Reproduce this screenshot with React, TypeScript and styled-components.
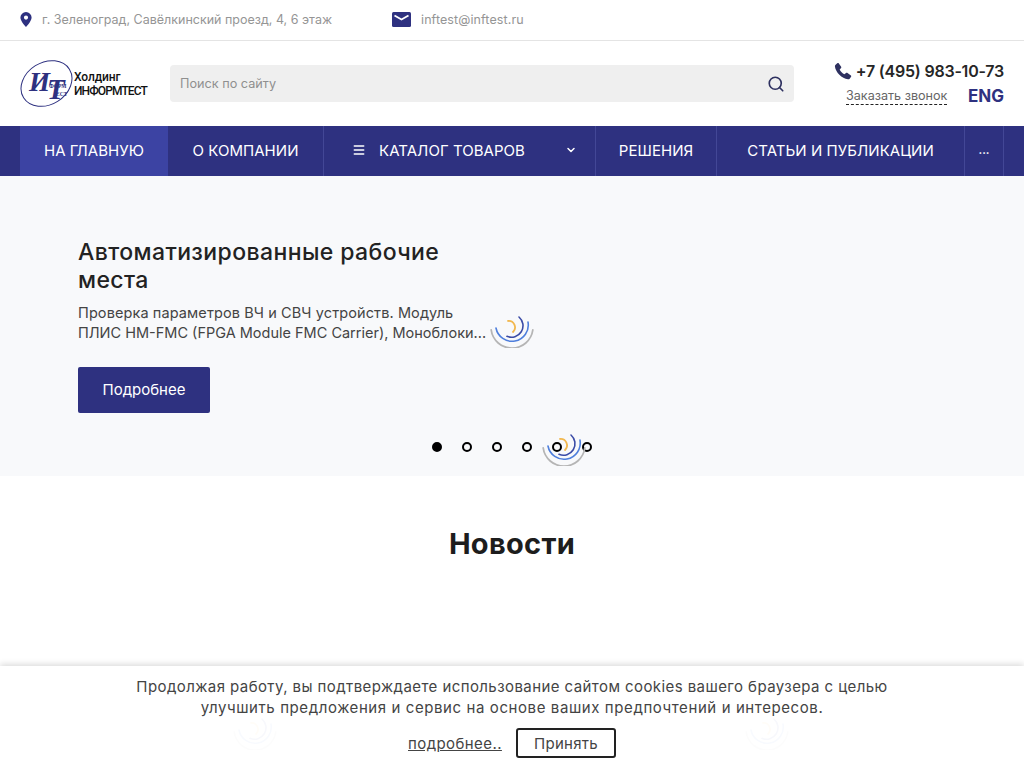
import React from "react";
import styled, { createGlobalStyle } from "styled-components";
import { Search, ChevronDown, Menu } from "lucide-react";

const Global = createGlobalStyle`
  html, body { margin: 0; padding: 0; background: #fff; }
  body { font-family: Inter, "Open Sans", sans-serif; color: #1f1f1f; overflow: hidden; }
  * { box-sizing: border-box; }
`;

const Page = styled.div`
  width: 1024px;
  height: 768px;
  overflow: hidden;
  position: relative;
`;

const TopBar = styled.div`
  height: 41px;
  border-bottom: 1px solid #e4e4e4;
  display: flex;
  align-items: center;
  padding: 0 0 2px 20px;
`;

const TopItem = styled.div<{ $w: number; $ls: number }>`
  width: ${(p) => p.$w}px;
  display: flex;
  align-items: center;
  color: #959595;
  font-size: 12.5px;
  letter-spacing: ${(p) => p.$ls}px;
`;

const TopIcon = styled.span<{ $w: number }>`
  width: ${(p) => p.$w}px;
  display: flex;
  align-items: center;
`;

const Header = styled.div`
  height: 85px;
  display: flex;
  align-items: center;
  padding: 0 20px;
`;

const LogoBox = styled.div`
  width: 150px;
  display: flex;
  align-items: center;
  flex: none;
`;

const LogoWords = styled.div`
  font-family: Roboto, "Liberation Sans", sans-serif;
  color: #111;
  font-size: 12px;
  line-height: 14px;
  font-weight: 500;
`;

const LogoLine = styled.div<{ $tight?: boolean }>`
  letter-spacing: ${(p) => (p.$tight ? "-0.9px" : "-0.1px")};
  white-space: nowrap;
`;

const SearchBox = styled.div`
  width: 624px;
  height: 37px;
  background: #efefef;
  border-radius: 4px;
  display: flex;
  align-items: center;
  justify-content: space-between;
  padding: 0 9px 0 10px;
  color: #8f8f8f;
  font-size: 12.7px;
`;

const Contacts = styled.div`
  margin-left: auto;
  width: 172px;
  display: flex;
  flex-direction: column;
  align-items: flex-end;
`;

const PhoneRow = styled.div`
  display: flex;
  align-items: center;
  gap: 3px;
  font-size: 16px;
  font-weight: 600;
  letter-spacing: -0.22px;
  color: #262626;
  white-space: nowrap;
  height: 20px;
`;

const LowerRow = styled.div`
  display: flex;
  align-items: center;
  justify-content: space-between;
  width: 158px;
  margin-top: 5px;
`;

const CallLink = styled.span`
  color: #666;
  font-size: 12.6px;
  border-bottom: 1px dashed #222;
  line-height: 17px;
  white-space: nowrap;
`;

const Lang = styled.span`
  color: #2e3180;
  font-size: 17px;
  font-weight: 700;
`;

const Nav = styled.nav`
  height: 50px;
  background: #2e3180;
  padding: 0 20px;
  display: flex;
`;

const NavItem = styled.div<{ $w: number; $active?: boolean; $line?: boolean }>`
  width: ${(p) => p.$w}px;
  flex: none;
  display: flex;
  align-items: center;
  justify-content: center;
  padding-bottom: 2px;
  color: #fff;
  font-size: 15px;
  letter-spacing: 0.05px;
  white-space: nowrap;
  background: ${(p) => (p.$active ? "#3c43a3" : "transparent")};
  border-right: ${(p) => (p.$line ? "1px solid #434796" : "none")};
`;

const CatalogItem = styled(NavItem)`
  justify-content: flex-start;
  padding-left: 28px;
`;

const CatalogLabel = styled.span`
  margin-left: 13px;
  width: 186px;
`;

const MoreDots = styled.span`
  font-size: 11px;
  font-weight: 700;
`;

const Hero = styled.section`
  height: 300px;
  background: #f8f9fb;
  position: relative;
  padding: 62px 0 0 78px;
`;

const HeroTitle = styled.h2`
  margin: 0;
  width: 400px;
  font-size: 23px;
  line-height: 28px;
  font-weight: 500;
  letter-spacing: 0.4px;
  color: #222;
`;

const HeroText = styled.div`
  margin: 9px 0 0;
  width: 420px;
  font-size: 14.5px;
  line-height: 20px;
  color: #444;
  white-space: nowrap;
`;

const TextLine = styled.div<{ $ls: number }>`
  letter-spacing: ${(p) => p.$ls}px;
`;

const MoreButton = styled.div`
  margin-top: 24px;
  width: 132px;
  height: 46px;
  background: #2e3180;
  color: #fff;
  border-radius: 2px;
  font-size: 15px;
  padding-bottom: 2px;
  display: flex;
  align-items: center;
  justify-content: center;
`;

const Dots = styled.div`
  position: absolute;
  left: 432px;
  top: 266px;
  display: flex;
  gap: 20px;
`;

const Dot = styled.span<{ $on?: boolean }>`
  width: 10px;
  height: 10px;
  border-radius: 50%;
  border: 2px solid #000;
  background: ${(p) => (p.$on ? "#000" : "transparent")};
`;

const SpinnerSlot = styled.div<{ $x: number; $y: number }>`
  position: absolute;
  left: ${(p) => p.$x}px;
  top: ${(p) => p.$y}px;
  width: 44px;
  height: 44px;
`;

const News = styled.section`
  position: relative;
  padding-top: 50px;
  height: 292px;
`;

const NewsTitle = styled.h2`
  margin: 0;
  text-align: center;
  font-size: 29px;
  line-height: 36px;
  font-weight: 700;
  letter-spacing: 0.3px;
  color: #1d1d1d;
`;

const Cookie = styled.div`
  position: absolute;
  left: 0;
  right: 0;
  bottom: 0;
  height: 102px;
  background: rgba(255, 255, 255, 0.96);
  box-shadow: 0 -2px 6px rgba(0, 0, 0, 0.14);
  display: flex;
  flex-direction: column;
  align-items: center;
  padding-top: 10px;
  color: #444;
`;

const CookieText = styled.div`
  font-size: 15px;
  line-height: 21px;
  text-align: center;
  white-space: nowrap;
`;

const CookieActions = styled.div`
  display: flex;
  align-items: center;
  gap: 13px;
  margin-top: 10px;
`;

const MoreLink = styled.span`
  width: 95px;
  font-size: 15px;
  letter-spacing: 0.42px;
  text-decoration: underline;
  white-space: nowrap;
  color: #444;
`;

const AcceptButton = styled.div`
  width: 100px;
  height: 30px;
  border: 2px solid #222;
  border-radius: 3px;
  display: flex;
  align-items: center;
  justify-content: center;
  font-size: 15px;
  letter-spacing: 0.3px;
  color: #444;
  background: #fff;
`;

const Spinner = () => (
  <svg width="44" height="44" viewBox="0 0 44 44" fill="none" strokeLinecap="round">
    <path d="M1.2 26A21 21 0 0 0 42.8 26" stroke="#b5b5b5" strokeWidth="1.8" />
    <path d="M6 24A16 16 0 0 0 38 18" stroke="#4f7fdc" strokeWidth="1.6" />
    <path d="M17 32.3A11.5 11.5 0 0 0 29 13" stroke="#3a4ba6" strokeWidth="1.6" />
    <path d="M18 17A6.4 6.4 0 0 1 23 28" stroke="#f2b84f" strokeWidth="1.8" />
  </svg>
);

const Logo = () => (
  <svg width="54" height="52" viewBox="0 0 54 52">
    <ellipse cx="26.5" cy="25.5" rx="27" ry="21" transform="rotate(-32 26.5 25.5)" fill="none" stroke="#2e3180" strokeWidth="1" />
    <text fontFamily="Liberation Serif, serif" fontWeight="700" fill="#2e3180">
      <tspan x="9" y="33" fontStyle="italic" fontSize="27">И</tspan>
      <tspan x="27" y="41" fontStyle="italic" fontSize="29">Т</tspan>
      <tspan x="29" y="30" fontSize="5.5">ФОРМ</tspan>
      <tspan x="36" y="38" fontSize="5.5">ЕСТ</tspan>
    </text>
  </svg>
);

export default function App() {
  return (
    <Page>
      <Global />
      <TopBar>
        <TopItem $w={372} $ls={0}>
          <TopIcon $w={22}>
            <svg width="12" height="15" viewBox="0 0 12 15">
              <path fillRule="evenodd" d="M6 0a5.6 5.6 0 0 1 5.6 5.6C11.6 9.4 6 15 6 15S.4 9.4.4 5.6A5.6 5.6 0 0 1 6 0Zm0 3.5a2.1 2.1 0 1 0 0 4.2 2.1 2.1 0 0 0 0-4.2Z" fill="#2e3180" />
            </svg>
          </TopIcon>
          г. Зеленоград, Савёлкинский проезд, 4, 6 этаж
        </TopItem>
        <TopItem $w={200} $ls={0.1}>
          <TopIcon $w={29}>
            <svg width="19" height="15" viewBox="0 0 19 15">
              <rect width="19" height="15" rx="1.5" fill="#2e3180" />
              <path d="M2.5 3.5 9.5 7.5 16.5 3.5" fill="none" stroke="#fff" strokeWidth="1.8" />
            </svg>
          </TopIcon>
          inftest@inftest.ru
        </TopItem>
      </TopBar>
      <Header>
        <LogoBox>
          <Logo />
          <LogoWords>
            <LogoLine>Холдинг</LogoLine>
            <LogoLine $tight>ИНФОРМТЕСТ</LogoLine>
          </LogoWords>
        </LogoBox>
        <SearchBox>
          Поиск по сайту
          <Search size={18} color="#2e3160" strokeWidth={2.2} />
        </SearchBox>
        <Contacts>
          <PhoneRow>
            <svg width="20" height="20" viewBox="0 0 24 24">
              <path d="M6.6 2.5 9.8 7c.3.5.3 1-.1 1.4L8 10.3c1 2.3 3.4 4.7 5.7 5.7l1.9-1.7c.4-.4.9-.4 1.4-.1l4.5 3.2c.5.4.6 1 .2 1.5l-1.7 2.3c-.5.6-1.2.9-2 .8C10.5 20.8 3.2 13.5 2.3 6.5c-.1-.8.2-1.500.8-2l2-1.800c.5-.4 1.100-.6 1.500-.2Z" fill="#2e3160" />
            </svg>
            +7 (495) 983-10-73
          </PhoneRow>
          <LowerRow>
            <CallLink>Заказать звонок</CallLink>
            <Lang>ENG</Lang>
          </LowerRow>
        </Contacts>
      </Header>
      <Nav>
        <NavItem $w={148} $active>НА ГЛАВНУЮ</NavItem>
        <NavItem $w={156} $line>О КОМПАНИИ</NavItem>
        <CatalogItem $w={272} $line>
          <Menu size={14} strokeWidth={2.6} />
          <CatalogLabel>КАТАЛОГ ТОВАРОВ</CatalogLabel>
          <ChevronDown size={12} strokeWidth={3} />
        </CatalogItem>
        <NavItem $w={121} $line>РЕШЕНИЯ</NavItem>
        <NavItem $w={248} $line>СТАТЬИ И ПУБЛИКАЦИИ</NavItem>
        <NavItem $w={39} $line><MoreDots>...</MoreDots></NavItem>
      </Nav>
      <Hero>
        <HeroTitle>Автоматизированные рабочие места</HeroTitle>
        <HeroText>
          <TextLine $ls={0.1}>Проверка параметров ВЧ и СВЧ устройств. Модуль</TextLine>
          <TextLine $ls={0}>ПЛИС HM-FMC (FPGA Module FMC Carrier), Моноблоки...</TextLine>
        </HeroText>
        <MoreButton>Подробнее</MoreButton>
        <SpinnerSlot $x={490} $y={128}><Spinner /></SpinnerSlot>
        <Dots>
          <Dot $on /><Dot /><Dot /><Dot /><Dot /><Dot />
        </Dots>
        <SpinnerSlot $x={542} $y={246}><Spinner /></SpinnerSlot>
      </Hero>
      <News>
        <NewsTitle>Новости</NewsTitle>
        <SpinnerSlot $x={233} $y={230}><Spinner /></SpinnerSlot>
        <SpinnerSlot $x={745} $y={230}><Spinner /></SpinnerSlot>
      </News>
      <Cookie>
        <CookieText>
          <TextLine $ls={0.42}>Продолжая работу, вы подтверждаете использование сайтом cookies вашего браузера с целью</TextLine>
          <TextLine $ls={0.59}>улучшить предложения и сервис на основе ваших предпочтений и интересов.</TextLine>
        </CookieText>
        <CookieActions>
          <MoreLink>подробнее..</MoreLink>
          <AcceptButton>Принять</AcceptButton>
        </CookieActions>
      </Cookie>
    </Page>
  );
}
